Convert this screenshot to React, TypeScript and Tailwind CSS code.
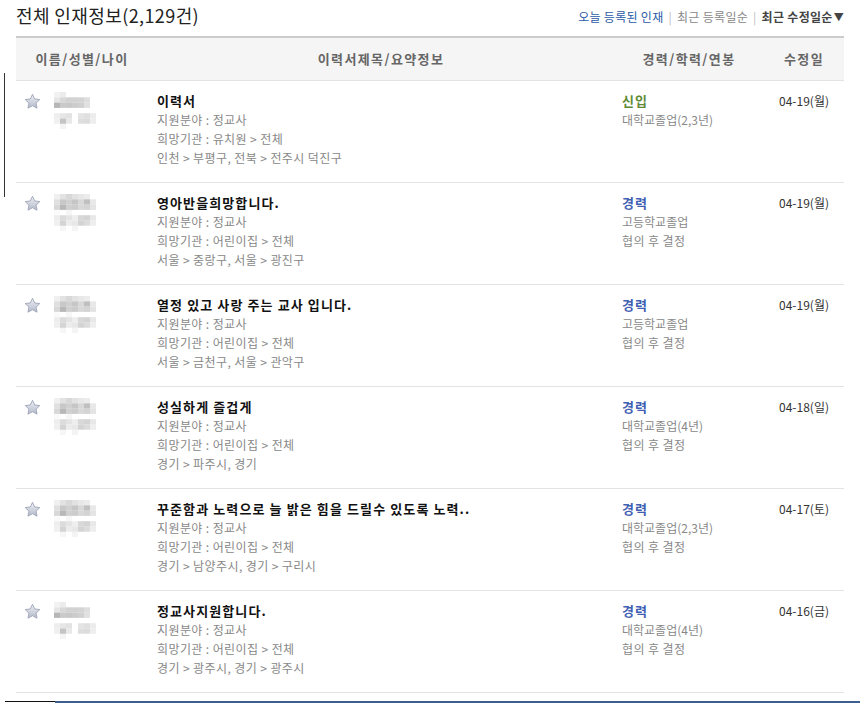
import React from "react";

type Row = {
  title: string;
  field: string;
  org: string;
  region: string;
  career: "신입" | "경력";
  edu: string;
  pay?: string;
  date: string;
  pattern: number;
};

const rows: Row[] = [
  { title: "이력서", field: "지원분야 : 정교사", org: "희망기관 : 유치원 > 전체", region: "인천 > 부평구, 전북 > 전주시 덕진구", career: "신입", edu: "대학교졸업(2,3년)", date: "04-19(월)", pattern: 0 },
  { title: "영아반을희망합니다.", field: "지원분야 : 정교사", org: "희망기관 : 어린이집 > 전체", region: "서울 > 중랑구, 서울 > 광진구", career: "경력", edu: "고등학교졸업", pay: "협의 후 결정", date: "04-19(월)", pattern: 1 },
  { title: "열정 있고 사랑 주는 교사 입니다.", field: "지원분야 : 정교사", org: "희망기관 : 어린이집 > 전체", region: "서울 > 금천구, 서울 > 관악구", career: "경력", edu: "고등학교졸업", pay: "협의 후 결정", date: "04-19(월)", pattern: 1 },
  { title: "성실하게 즐겁게", field: "지원분야 : 정교사", org: "희망기관 : 어린이집 > 전체", region: "경기 > 파주시, 경기", career: "경력", edu: "대학교졸업(4년)", pay: "협의 후 결정", date: "04-18(일)", pattern: 1 },
  { title: "꾸준함과 노력으로 늘 밝은 힘을 드릴수 있도록 노력..", field: "지원분야 : 정교사", org: "희망기관 : 어린이집 > 전체", region: "경기 > 남양주시, 경기 > 구리시", career: "경력", edu: "대학교졸업(2,3년)", pay: "협의 후 결정", date: "04-17(토)", pattern: 1 },
  { title: "정교사지원합니다.", field: "지원분야 : 정교사", org: "희망기관 : 어린이집 > 전체", region: "경기 > 광주시, 경기 > 광주시", career: "경력", edu: "대학교졸업(4년)", pay: "협의 후 결정", date: "04-16(금)", pattern: 0 },
];

const W = "#ffffff";
const patterns: string[][][] = [
  [
    ["#f2f2f2", "#ececec", W, W, W, W, W],
    ["#e6e6e6", "#d8d8d8", "#d2d2d2", "#d2d2d2", "#d4d4d4", "#dedede", W],
    ["#b6b6b6", "#cacaca", "#c8c8c8", "#cccccc", "#d0d0d0", "#e0e0e0", W],
    [W, W, W, W, W, W, W],
    ["#eeeeee", "#e6e6e6", "#e2e2e2", W, "#e4e4e4", "#e0e0e0", "#ececec"],
    ["#f0f0f0", "#c4c4c4", "#e8e8e8", W, "#dedede", "#dcdcdc", "#eeeeee"],
    [W, "#f4f4f4", W, W, W, W, W],
  ],
  [
    ["#f0f0f0", "#e2e2e2", "#d8d8d8", "#e2e2e2", "#e8e8e8", "#ececec", W],
    ["#e0e0e0", "#c8c8c8", "#d0d0d0", "#c6c6c6", "#d8d8d8", "#c0c0c0", "#e8e8e8"],
    ["#d8d8d8", "#b8b8b8", "#d0d0d0", "#cccccc", "#d8d8d8", "#d4d4d4", "#e4e4e4"],
    ["#fafafa", W, "#f6f6f6", W, W, W, W],
    ["#eeeeee", "#dcdcdc", "#e4e4e4", "#eeeeee", "#d8d8d8", "#d4d4d4", "#e8e8e8"],
    ["#f0f0f0", "#d4d4d4", "#ececec", "#e8e8e8", "#d4d4d4", "#dcdcdc", "#eeeeee"],
    [W, "#f6f6f6", W, "#f4f4f4", W, W, W],
  ],
];

function Mosaic({ p }: { p: number }) {
  const grid = patterns[p];
  return (
    <svg width="42" height="37" viewBox="0 0 42 37" className="block">
      {grid.map((r, y) =>
        r.map((c, x) => (
          <rect key={`${x}-${y}`} x={x * 6} y={y * 5.3} width="6" height="5.4" fill={c} />
        ))
      )}
    </svg>
  );
}

function Star() {
  return (
    <svg width="17" height="17" viewBox="0 0 24 24" className="block">
      <defs>
        <linearGradient id="sg" x1="0" y1="0" x2="0" y2="1">
          <stop offset="0" stopColor="#eef0f5" />
          <stop offset="1" stopColor="#b3bacb" />
        </linearGradient>
      </defs>
      <path
        d="M12 1.8l3.1 6.6 7.2.9-5.3 5 1.4 7.1L12 17.9l-6.4 3.5L7 14.3l-5.3-5 7.2-.9z"
        fill="url(#sg)"
        stroke="#9ea5b6"
        strokeWidth="1.3"
        strokeLinejoin="round"
      />
    </svg>
  );
}

export default function App() {
  return (
    <div
      className="relative w-[865px] h-[710px] bg-white overflow-hidden"
      style={{ fontFamily: '"Noto Sans CJK KR", "Noto Sans", sans-serif' }}
    >
      <div className="absolute left-[4px] top-[73px] w-[1px] h-[124px] bg-[#333]" />

      <div className="ml-4 w-[828px]">
        <div className="flex h-[36px] items-center justify-between">
          <h1 className="mb-[6px] text-[18px] leading-[24px] text-[#222] tracking-[0.4px]">
            전체 인재정보(2,129건)
          </h1>
          <div className="flex items-center text-[12px] leading-[18px] mt-[-2px] tracking-[0.3px]">
            <span className="text-[#2a5aa8]">오늘 등록된 인재</span>
            <span className="mx-[5px] text-[#bbb]">|</span>
            <span className="text-[#888]">최근 등록일순</span>
            <span className="mx-[5px] text-[#bbb]">|</span>
            <span className="font-bold text-[#444]">최근 수정일순</span>
            <span className="text-[10px] text-[#444] ml-[1px]">▼</span>
          </div>
        </div>

        <div className="border-t-2 border-[#cccccc]">
          <div className="grid grid-cols-[132px_466px_150px_80px] h-[43px] items-center bg-[#f5f5f5] border-b border-[#e3e3e3] text-[13px] font-bold text-[#666] tracking-[1.4px]">
            <div className="text-center">이름/성별/나이</div>
            <div className="text-center">이력서제목/요약정보</div>
            <div className="text-center">경력/학력/연봉</div>
            <div className="text-center">수정일</div>
          </div>

          {rows.map((r, i) => (
            <div
              key={i}
              className="grid grid-cols-[132px_466px_150px_80px] h-[102px] border-b border-[#e3e3e3]"
            >
              <div className="flex pt-[12px] pl-[8px]">
                <Star />
                <div className="ml-[13px] -mt-[1px]">
                  <Mosaic p={r.pattern} />
                </div>
              </div>
              <div className="pt-[10px] pl-[9px] leading-[19px]">
                <div className="text-[13px] font-bold text-[#111] tracking-[1.1px]">{r.title}</div>
                <div className="text-[12px] text-[#888] tracking-[0.4px]">{r.field}</div>
                <div className="text-[12px] text-[#888] tracking-[0.4px]">{r.org}</div>
                <div className="text-[12px] text-[#888] tracking-[0.4px]">{r.region}</div>
              </div>
              <div className="pt-[10px] pl-[8px] leading-[19px]">
                <div
                  className={
                    r.career === "신입"
                      ? "text-[13px] font-bold text-[#5f8a35] tracking-[1px]"
                      : "text-[13px] font-bold text-[#3f60b2] tracking-[1px]"
                  }
                >
                  {r.career}
                </div>
                <div className="text-[12px] text-[#888]">{r.edu}</div>
                {r.pay && <div className="text-[12px] text-[#888] tracking-[0.4px]">{r.pay}</div>}
              </div>
              <div className="pt-[10px] text-center leading-[19px] text-[12px] text-[#333]">
                {r.date}
              </div>
            </div>
          ))}
        </div>
      </div>

      <div className="mt-[8px] ml-[5px] flex w-[855px]">
        <div className="h-[1px] w-[50px] bg-[#111]" />
        <div className="h-[2px] flex-1 bg-[#3b5f8f]" />
      </div>
    </div>
  );
}
